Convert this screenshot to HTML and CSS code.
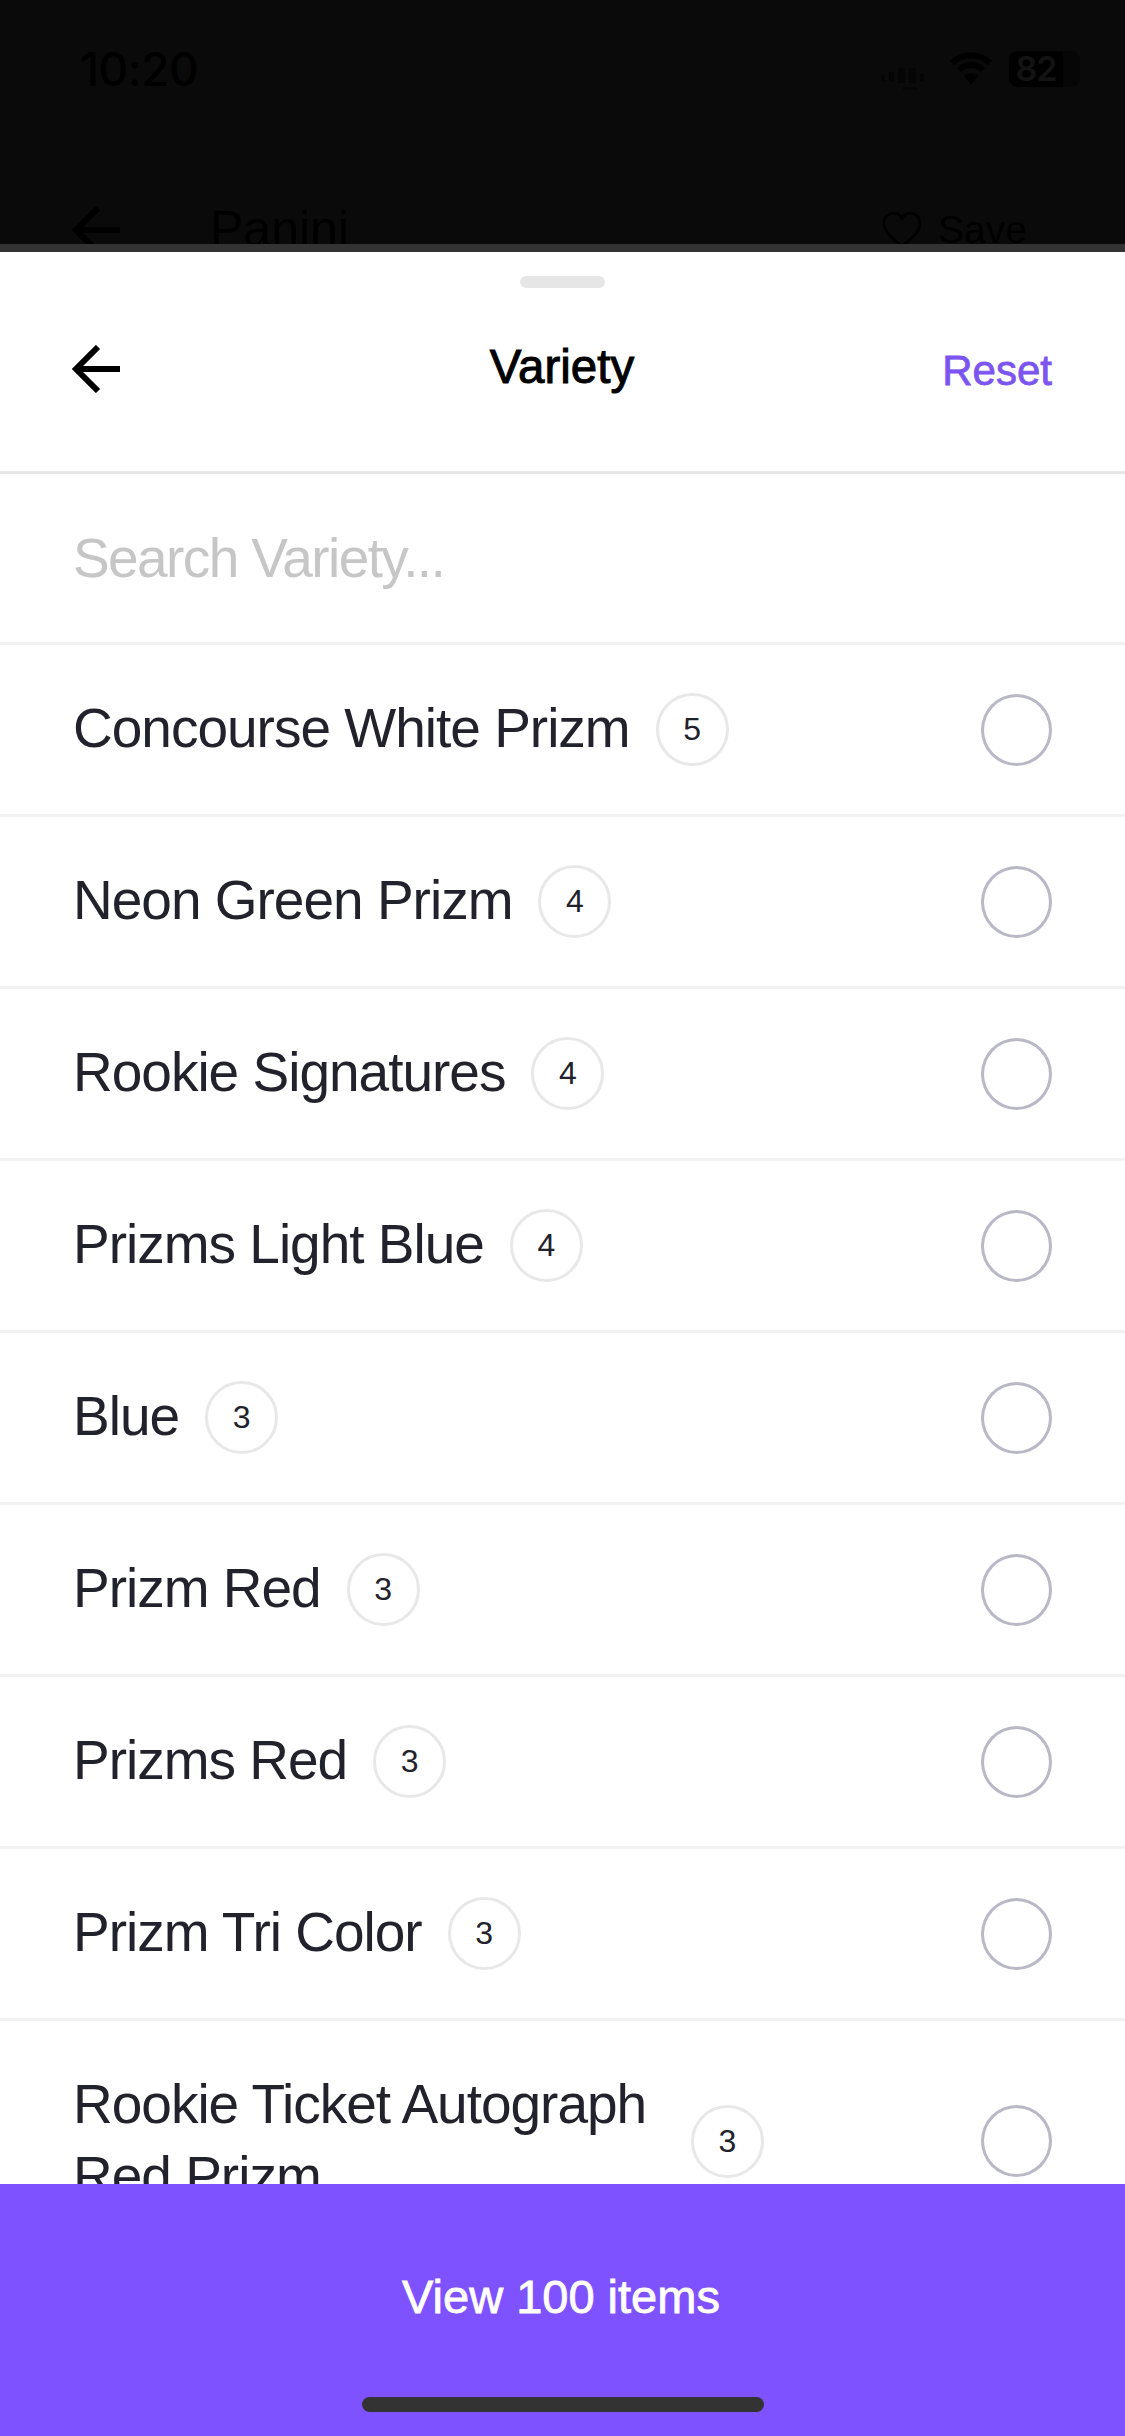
FILE: index.html
```html
<!DOCTYPE html>
<html lang="en">
<head>
<meta charset="utf-8">
<title>Variety</title>
<link rel="stylesheet" href="styles.css">
</head>
<body>
<div class="screen">
  <div class="backdrop">
    <div class="status">
      <span class="time">10:20</span>
      <div class="status-icons">
        <svg class="signal" viewBox="0 0 50 28"><g fill="#050505"><rect x="2" y="11" width="4" height="6"/><rect x="10" y="8" width="5" height="10"/><rect x="19" y="4" width="7" height="15"/><rect x="30" y="4" width="7" height="15"/><rect x="41" y="9" width="4" height="8"/><rect x="24" y="23" width="14" height="3"/></g></svg>
        <svg class="wifi" viewBox="0 0 44 34"><path d="M3 11a27 27 0 0 1 38 0M10 18a17 17 0 0 1 24 0" fill="none" stroke="#000" stroke-width="6"/><path d="M22 33l-7-9a10 10 0 0 1 14 0z" fill="#000"/></svg>
        <div class="battery"><span class="battery-fill">82</span></div>
      </div>
    </div>
    <div class="under-nav">
      <div class="under-left">
        <svg class="arrow" viewBox="0 0 48 48"><path d="M48 24H4M26 2L4 24L26 46" fill="none" stroke="#000" stroke-width="6"/></svg>
        <span class="under-title">Panini</span>
      </div>
      <div class="under-save">
        <svg class="heart" viewBox="0 0 40 38"><path d="M20 35C8 26 2 20 2 12C2 6 7 2 12 2C15 2 18 4 20 7C22 4 25 2 28 2C33 2 38 6 38 12C38 20 32 26 20 35Z" fill="none" stroke="#000" stroke-width="3"/></svg>
        <span class="save-text">Save</span>
      </div>
    </div>
  </div>
  <div class="strip"></div>
  <main class="sheet">
    <div class="grabber"></div>
    <header class="sheet-head">
      <svg class="arrow" viewBox="0 0 48 48"><path d="M48 24H4M26 2L4 24L26 46" fill="none" stroke="#000" stroke-width="6"/></svg>
      <h1 class="sheet-title">Variety</h1>
      <span class="reset">Reset</span>
    </header>
    <div class="search">Search Variety...</div>
    <ul class="list">
      <li class="row"><span class="label">Concourse White Prizm</span><span class="badge">5</span><span class="radio"></span></li>
      <li class="row"><span class="label">Neon Green Prizm</span><span class="badge">4</span><span class="radio"></span></li>
      <li class="row"><span class="label">Rookie Signatures</span><span class="badge">4</span><span class="radio"></span></li>
      <li class="row"><span class="label">Prizms Light Blue</span><span class="badge">4</span><span class="radio"></span></li>
      <li class="row"><span class="label">Blue</span><span class="badge">3</span><span class="radio"></span></li>
      <li class="row"><span class="label">Prizm Red</span><span class="badge">3</span><span class="radio"></span></li>
      <li class="row"><span class="label">Prizms Red</span><span class="badge">3</span><span class="radio"></span></li>
      <li class="row"><span class="label">Prizm Tri Color</span><span class="badge">3</span><span class="radio"></span></li>
      <li class="row"><span class="label">Rookie Ticket Autograph Red Prizm</span><span class="badge">3</span><span class="radio"></span></li>
    </ul>
    <footer class="cta">
      <span class="cta-text">View 100 items</span>
      <div class="home"></div>
    </footer>
  </main>
</div>
</body>
</html>
```
FILE: styles.css
```css
* { box-sizing: border-box; }
html, body { margin: 0; padding: 0; }
body { font-family: "Liberation Sans", Arial, sans-serif; background: #fff; }
.screen { width: 1125px; height: 2436px; display: flex; flex-direction: column; overflow: hidden; }

.backdrop { height: 244px; flex: none; background: #0a0a0a; overflow: hidden; color: #000; padding: 0 72px 0 72px; }
.status { height: 100px; padding-top: 48px; display: flex; justify-content: space-between; align-items: flex-start; }
.time { font-family: Inter, sans-serif; font-size: 46px; line-height: 42px; font-weight: 500; padding-left: 8px; letter-spacing: -0.5px; }
.status-icons { display: flex; align-items: flex-start; margin-right: -27px; }
.signal { width: 50px; height: 28px; margin-top: 16px; }
.wifi { width: 44px; height: 34px; margin-left: 20px; margin-top: 4px; }
.battery { width: 71px; height: 36px; margin-left: 16px; margin-top: 3px; background: #060606; border-radius: 9px; }
.battery-fill { display: block; width: 54px; height: 36px; background: #000; border-radius: 9px 0 0 9px; color: #131313; font-family: Inter, sans-serif; font-size: 34px; line-height: 36px; font-weight: 600; letter-spacing: -1px; text-align: center; }
.under-nav { display: flex; justify-content: space-between; align-items: center; padding-top: 100px; }
.under-left { display: flex; align-items: center; gap: 90px; }
.under-title { font-size: 50px; line-height: 60px; position: relative; top: -1px; }
.under-save { display: flex; align-items: center; gap: 16px; margin-right: 26px; }
.heart { width: 40px; height: 38px; }
.save-text { font-size: 39px; line-height: 50px; }
.arrow { width: 48px; height: 48px; flex: none; display: block; }

.strip { height: 8px; flex: none; background: #333; }

.sheet { flex: 1; min-height: 0; display: flex; flex-direction: column; background: #fff; }
.grabber { flex: none; width: 85px; height: 12px; margin: 24px auto 0; background: #e6e6e6; border-radius: 6px; }
.sheet-head { flex: none; height: 186px; padding: 33px 73px 54px 72px; display: grid; grid-template-columns: 1fr auto 1fr; align-items: center; border-bottom: 3px solid #e6e6e6; }
.sheet-title { margin: 0; font-size: 47.5px; line-height: 56px; font-weight: 400; -webkit-text-stroke: 1px #000; color: #000; position: relative; top: -2px; }
.reset { justify-self: end; font-size: 42px; line-height: 48px; font-weight: 400; -webkit-text-stroke: 0.8px #7c55f0; color: #7c55f0; position: relative; top: 2px; }

.search { flex: none; height: 171px; padding: 0 73px; display: flex; align-items: center; border-bottom: 3px solid #f2f2f2; font-size: 55px; letter-spacing: -1.6px; color: #c6c6c6; }

.list { flex: 1; min-height: 0; overflow: hidden; list-style: none; margin: 0; padding: 0; }
.row { display: flex; align-items: center; padding: 48px 73px 48px 73px; border-bottom: 3px solid #f2f2f2; color: #22222c; }
.label { font-size: 55px; line-height: 72px; letter-spacing: -1px; max-width: 592px; position: relative; top: -1.5px; }
.badge { flex: none; width: 73px; height: 73px; margin-left: 26px; border: 3px solid #e8e8e8; border-radius: 50%; display: flex; align-items: center; justify-content: center; font-size: 32px; }
.radio { flex: none; width: 71px; height: 72px; margin-left: auto; border: 3px solid #b8b8c6; border-radius: 50%; }

.cta { flex: none; height: 252px; background: #7f52ff; display: flex; flex-direction: column; align-items: center; padding-top: 84px; color: #fff; }
.cta-text { font-size: 47px; line-height: 58px; font-weight: 400; -webkit-text-stroke: 0.8px #fff; margin-right: 3px; }
.home { width: 402px; height: 15px; margin-top: 71px; background: #333; border-radius: 8px; }
```
